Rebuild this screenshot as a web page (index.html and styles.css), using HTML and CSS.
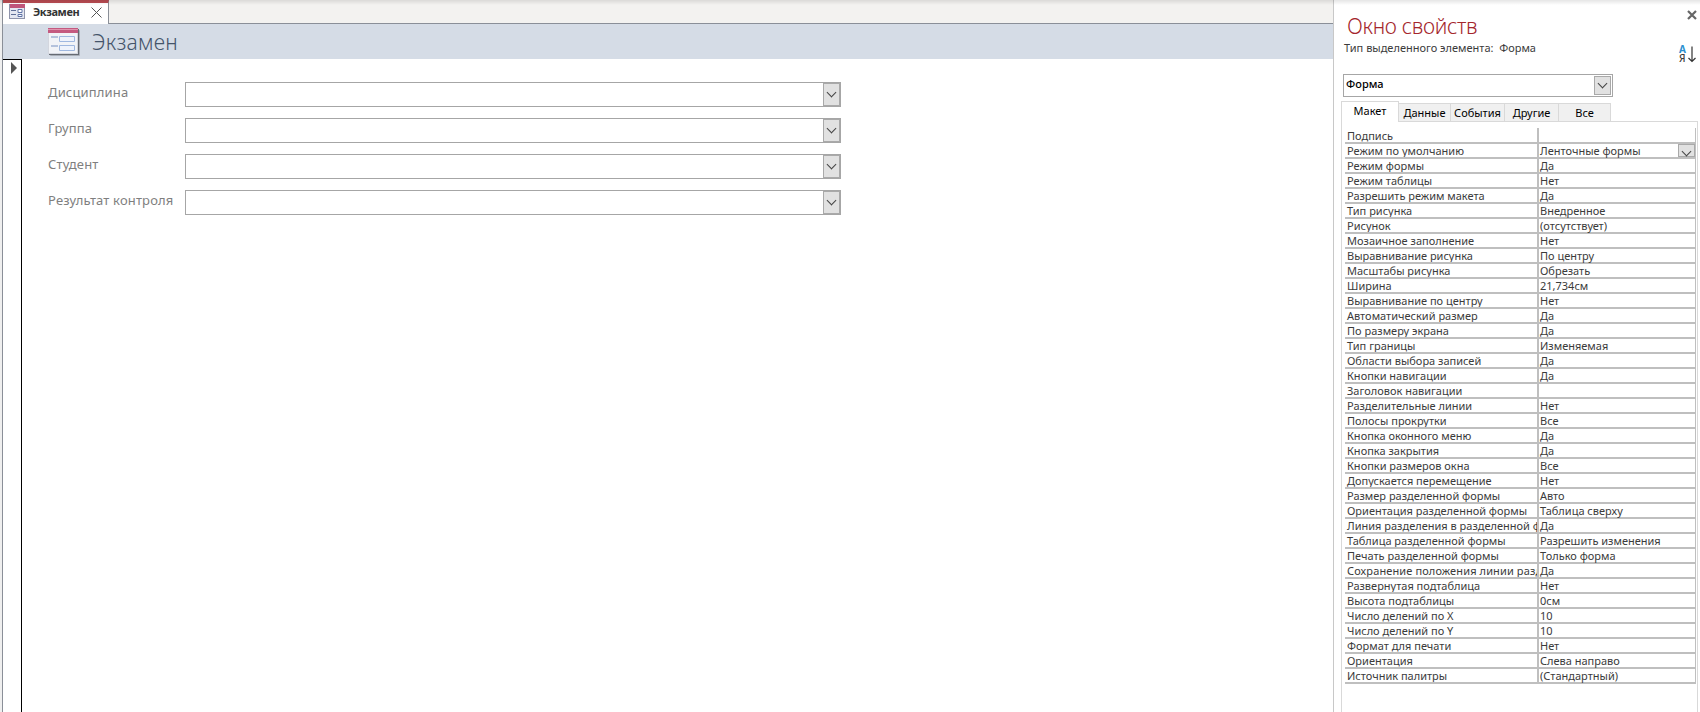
FILE: index.html
```html
<!DOCTYPE html>
<html lang="ru">
<head>
    <meta charset="UTF-8">
    <title>Экзамен</title>
    <link rel="stylesheet" href="styles.css">
</head>
<body>
    <div class="workspace">
        <!-- Вкладки -->
        <div class="tab-bar">
            <div class="doc-tab">
                <svg class="tab-icon" width="16" height="15" viewBox="0 0 16 15">
                    <rect x="0.5" y="0.5" width="15" height="14" fill="#e4e7f1" stroke="#8f94ab"/>
                    <rect x="1" y="0" width="15" height="4" fill="#c0557a"/>
                    <path d="M2 6.5h5M2 10.5h5" stroke="#5f6e96"/>
                    <path d="M9 5.5h4v3h-4zM9 10.5h4v2h-4z" fill="#fff" stroke="#5f73a6"/>
                </svg>
                <span class="tab-name">Экзамен</span>
                <svg class="tab-close" width="11" height="11" viewBox="0 0 11 11"><path d="M0.5 0.5l10 10M10.5 0.5l-10 10" stroke="#555" fill="none"/></svg>
            </div>
        </div>

        <!-- Заголовок формы -->
        <div class="form-header">
            <svg class="form-icon" width="32" height="29" viewBox="0 0 32 29">
                <rect x="2" y="2" width="30" height="26" rx="1" fill="#a9afb8"/>
                <rect x="1" y="1" width="30" height="26" fill="#666b73"/>
                <rect x="0.5" y="0.5" width="29" height="25" fill="#f1f3f7" stroke="#d3d6de"/>
                <rect x="0" y="0" width="30" height="5" fill="#c45a80"/>
                <rect x="0" y="1" width="30" height="1" fill="#e195b0"/>
                <path d="M3 9h7M3 18h7" stroke="#b4c2dc" stroke-width="2"/>
                <path d="M11.5 8.5h15v5h-15zM11.5 17.5h15v5h-15z" fill="#eef3fc" stroke="#9fb8e0"/>
            </svg>
            <h1>Экзамен</h1>
        </div>

        <!-- Форма -->
        <div class="form-body">
            <div class="selector">
                <svg width="6" height="12" viewBox="0 0 6 12"><path d="M0 0l6 6-6 6z" fill="#555"/></svg>
            </div>
            <div class="fields">
                <div class="field"><label>Дисциплина</label><div class="combo"><span class="arrow"></span></div></div>
                <div class="field"><label>Группа</label><div class="combo"><span class="arrow"></span></div></div>
                <div class="field"><label>Студент</label><div class="combo"><span class="arrow"></span></div></div>
                <div class="field"><label>Результат контроля</label><div class="combo"><span class="arrow"></span></div></div>
            </div>
        </div>
    </div>

    <!-- Окно свойств -->
    <div class="panel">
        <div class="panel-head">
            <div>
                <h2>Окно свойств</h2>
                <p>Тип выделенного элемента:&nbsp; Форма</p>
            </div>
            <div class="panel-icons">
                <svg width="10" height="10" viewBox="0 0 10 10"><path d="M1 1l8 8M9 1l-8 8" stroke="#666" stroke-width="2.2"/></svg>
                <div class="sort">
                    <div class="letters"><b>А</b><i>Я</i></div>
                    <svg width="8" height="17" viewBox="0 0 8 17"><path d="M4 0.5v15M0.5 12l3.5 3.5 3.5-3.5" fill="none" stroke="#333" stroke-width="1.2"/></svg>
                </div>
            </div>
        </div>

        <div class="combo object"><span class="value">Форма</span><span class="arrow"></span></div>

        <div class="tabs">
            <span class="tab active">Макет</span>
            <span class="tab">Данные</span>
            <span class="tab">События</span>
            <span class="tab">Другие</span>
            <span class="tab">Все</span>
        </div>

        <div class="sheet">
            <div class="grid">
                <div class="row"><span>Подпись</span><span></span></div>
                <div class="row"><span>Режим по умолчанию</span><span>Ленточные формы</span><span class="arrow"></span></div>
                <div class="row"><span>Режим формы</span><span>Да</span></div>
                <div class="row"><span>Режим таблицы</span><span>Нет</span></div>
                <div class="row"><span>Разрешить режим макета</span><span>Да</span></div>
                <div class="row"><span>Тип рисунка</span><span>Внедренное</span></div>
                <div class="row"><span>Рисунок</span><span>(отсутствует)</span></div>
                <div class="row"><span>Мозаичное заполнение</span><span>Нет</span></div>
                <div class="row"><span>Выравнивание рисунка</span><span>По центру</span></div>
                <div class="row"><span>Масштабы рисунка</span><span>Обрезать</span></div>
                <div class="row"><span>Ширина</span><span>21,734см</span></div>
                <div class="row"><span>Выравнивание по центру</span><span>Нет</span></div>
                <div class="row"><span>Автоматический размер</span><span>Да</span></div>
                <div class="row"><span>По размеру экрана</span><span>Да</span></div>
                <div class="row"><span>Тип границы</span><span>Изменяемая</span></div>
                <div class="row"><span>Области выбора записей</span><span>Да</span></div>
                <div class="row"><span>Кнопки навигации</span><span>Да</span></div>
                <div class="row"><span>Заголовок навигации</span><span></span></div>
                <div class="row"><span>Разделительные линии</span><span>Нет</span></div>
                <div class="row"><span>Полосы прокрутки</span><span>Все</span></div>
                <div class="row"><span>Кнопка оконного меню</span><span>Да</span></div>
                <div class="row"><span>Кнопка закрытия</span><span>Да</span></div>
                <div class="row"><span>Кнопки размеров окна</span><span>Все</span></div>
                <div class="row"><span>Допускается перемещение</span><span>Нет</span></div>
                <div class="row"><span>Размер разделенной формы</span><span>Авто</span></div>
                <div class="row"><span>Ориентация разделенной формы</span><span>Таблица сверху</span></div>
                <div class="row"><span>Линия разделения в разделенной ф</span><span>Да</span></div>
                <div class="row"><span>Таблица разделенной формы</span><span>Разрешить изменения</span></div>
                <div class="row"><span>Печать разделенной формы</span><span>Только форма</span></div>
                <div class="row"><span class="wide">Сохранение положения линии разд</span><span>Да</span></div>
                <div class="row"><span>Развернутая подтаблица</span><span>Нет</span></div>
                <div class="row"><span>Высота подтаблицы</span><span>0см</span></div>
                <div class="row"><span>Число делений по X</span><span>10</span></div>
                <div class="row"><span>Число делений по Y</span><span>10</span></div>
                <div class="row"><span>Формат для печати</span><span>Нет</span></div>
                <div class="row"><span>Ориентация</span><span>Слева направо</span></div>
                <div class="row"><span>Источник палитры</span><span>(Стандартный)</span></div>
            </div>
        </div>
    </div>
    <div class="top-shadow"></div>
</body>
</html>
```

FILE: styles.css
```css
/* Общие стили */
* {
    box-sizing: border-box;
}

body {
    margin: 0;
    height: 712px;
    display: flex;
    overflow: hidden;
    background-color: #fff;
    font-family: "Noto Sans", "Open Sans", sans-serif;
    font-size: 11px;
    color: #3b3b3b;
}

h1, h2, p {
    margin: 0;
}

svg {
    display: block;
    flex: none;
}

.top-shadow {
    position: absolute;
    top: 0;
    left: 0;
    right: 0;
    height: 5px;
    background: linear-gradient(rgba(0, 0, 0, 0.1), rgba(0, 0, 0, 0));
}

/* Рабочая область */
.workspace {
    width: 1333px;
    display: flex;
    flex-direction: column;
    border-left: 2px solid #efefef;
}

.tab-bar {
    height: 24px;
    background-color: #f3f2f0;
    border-bottom: 1px solid #8a8f98;
    border-left: 1px solid #8a8f98;
}

.doc-tab {
    display: flex;
    align-items: center;
    width: 106px;
    height: 24px;
    padding: 1px 0 4px 6px;
    background-color: #fff;
    border-top: 3px solid #bb4c53;
    border-right: 1px solid #8a8f98;
}

.tab-icon {
    margin-top: -1px;
}

.tab-name {
    width: 46px;
    margin: -2px 0 0 8px;
    font-weight: bold;
    letter-spacing: -0.4px;
    color: #333;
}

.tab-close {
    margin: 0 0 0 12px;
}

.form-header {
    display: flex;
    height: 35px;
    padding: 4px 0 0 45px;
    background-color: #d5dce6;
    border-left: 1px solid #8a8f98;
}

.form-header h1 {
    margin-left: 12px;
    font-size: 21px;
    font-weight: 300;
    line-height: 28px;
    letter-spacing: 0.3px;
    color: #44546a;
}

.form-body {
    flex: 1;
    display: flex;
    border-left: 1px solid #8a8f98;
}

.selector {
    width: 19px;
    padding: 2px 0 0 8px;
    border-top: 1px solid #000;
    border-right: 1px solid #000;
}

.fields {
    padding: 23px 0 0 26px;
}

.field {
    display: flex;
    height: 36px;
}

.field label {
    width: 137px;
    font-size: 13px;
    line-height: 20px;
    letter-spacing: 0.15px;
    color: #7f7f7f;
    white-space: nowrap;
}

.combo {
    display: flex;
    justify-content: flex-end;
    width: 656px;
    height: 25px;
    border: 1px solid #a6a6a6;
}

.arrow {
    display: flex;
    align-items: center;
    justify-content: center;
    width: 17px;
    background-color: #e1e1e1;
    border: 1px solid #a9a9a9;
}

.arrow::before {
    content: "";
    width: 6px;
    height: 6px;
    margin-top: -4px;
    border-right: 1px solid #444;
    border-bottom: 1px solid #444;
    transform: rotate(45deg);
}

/* Окно свойств */
.panel {
    width: 367px;
    display: flex;
    flex-direction: column;
    border-left: 1px solid #c8c8c8;
}

.panel-head {
    display: flex;
    justify-content: space-between;
    height: 74px;
    padding: 10px 3px 0 10px;
}

.panel-head h2 {
    margin-left: 3px;
    font-size: 21px;
    font-weight: 300;
    line-height: 32px;
    letter-spacing: -0.3px;
    color: #a4262c;
}

.panel-head p {
    line-height: 12px;
}

.panel-icons {
    display: flex;
    flex-direction: column;
    align-items: flex-end;
    justify-content: space-between;
    padding-bottom: 11px;
}

.sort {
    display: flex;
    gap: 2px;
    align-items: center;
    margin-right: 1px;
}

.letters {
    display: flex;
    flex-direction: column;
    font-size: 10px;
    line-height: 9px;
}

.letters b {
    color: #2b8fd0;
}

.letters i {
    font-style: normal;
    font-weight: 500;
}

.object {
    width: 270px;
    height: 23px;
    margin-left: 9px;
    padding: 1px;
}

.object .value {
    flex: 1;
    padding-left: 1px;
    font-weight: 500;
    line-height: 16px;
    color: #000;
}

.tabs {
    display: flex;
    align-items: flex-end;
    height: 24px;
    margin-left: 7px;
    color: #000;
}

.tab {
    width: 54px;
    height: 18px;
    line-height: 18px;
    text-align: center;
    background-color: #f0f0f0;
    border: 1px solid #d9d9d9;
    border-width: 1px 1px 0 0;
}

.tab:nth-child(2),
.tab:last-child {
    width: 52px;
}

.tab.active {
    position: relative;
    z-index: 1;
    width: 58px;
    height: 21px;
    margin-bottom: -1px;
    background-color: #fff;
    border-left-width: 1px;
}

.sheet {
    flex: 1;
    margin: 0 2px 0 7px;
    padding: 6px 1px 0 3px;
    border: 1px solid #d9d9d9;
    border-bottom: none;
}

.grid {
    width: 351px;
    border-right: 1px solid #bfbfbf;
}

/* Строка свойства */
.row {
    display: flex;
    height: 15px;
    border-bottom: 2px solid #bfbfbf;
}

.row:first-child {
    height: 16px;
}

.row span {
    flex: 1;
    height: 13px;
    padding-left: 1px;
    line-height: 13px;
    white-space: nowrap;
}

.row span:first-child {
    flex: none;
    width: 194px;
    padding-left: 2px;
    border-right: 2px solid #bfbfbf;
    overflow: hidden;
}

.row:first-child span {
    height: 14px;
    line-height: 15px;
}

.row .wide {
    letter-spacing: 0.12px;
}

.row .arrow {
    flex: none;
    width: 17px;
    padding: 6px 0 0;
}
```
